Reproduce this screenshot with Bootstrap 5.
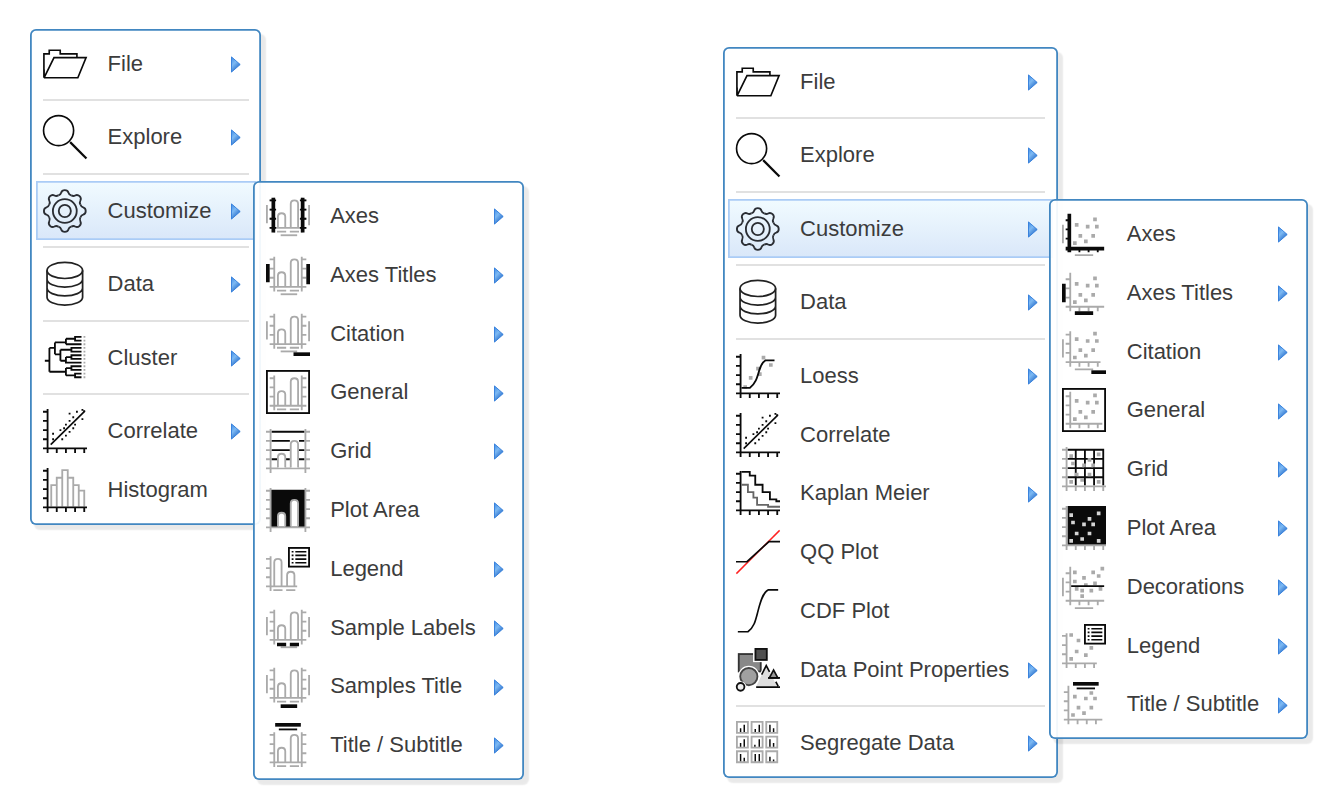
<!DOCTYPE html>
<html lang="en">
<head>
<meta charset="utf-8">
<meta name="viewport" content="width=device-width, initial-scale=1">
<title>Plot menus</title>
<link href="https://cdn.jsdelivr.net/npm/bootstrap@5.3.0/dist/css/bootstrap.min.css" rel="stylesheet">
<style>
  body { background: #fff; font-family: "Liberation Sans", Arial, sans-serif; height: 800px; overflow: hidden; }
  .stage { padding: 29px 0 0 30.3px; gap: 461.3px; }
  .plot-menu.dropdown-menu {
    --bs-dropdown-min-width: 0;
    padding: 5.5px;
    border: 0;
    border-radius: 6px;
    background: rgba(255,255,255,.93);
    box-shadow: inset 0 0 0 1.8px #4287c1, 4.5px 5px 1.5px rgba(0,0,0,.085);
    font-size: 22px;
    margin: 0;
  }
  .menu-a { width: 231.2px; }
  .menu-b { width: 335.3px; }
  .plot-menu.menu-b { margin-top: 18px; }
  .plot-menu.fly { position: absolute; top: -.3px; left: calc(100% - 3.1px); z-index: 5; }
  .fly-a { width: 271.2px; }
  .fly-b { width: 258.7px; }
  .plot-menu .dropdown-item {
    height: 58.8px; padding: 0 14.5px 0 7.4px; color: #3c3c3c; line-height: 1;
    border: 0 solid transparent;
  }
  .plot-menu .dropdown-item:hover { background: none; }
  .plot-menu .dropdown-item.picked {
    background: linear-gradient(#f1fbff, #d9e7f9);
    box-shadow: inset 0 0 0 1.8px #aaccf6;
  }
  .plot-menu .rule { height: 14.7px; padding: 6.2px 7.4px 0; }
  .plot-menu .rule hr { margin: 0; border: 0; height: 2px; background: #e1e1e1; opacity: 1; }
  .ico { width: 44px; height: 44px; flex: none; margin-right: 20.4px; overflow: visible; }
  .tip { width: 10px; height: 17px; flex: none; margin: 1.2px 0 0 auto; }
  symbol { overflow: visible; }
  .k, .g { fill: none; stroke: #0a0a0a; stroke-width: 1; }
  .g { stroke: #aaa; }
  .w2 { stroke-width: 2; }
</style>
</head>
<body>
<svg width="0" height="0" class="position-absolute" aria-hidden="true">
  <defs>
    <linearGradient id="blue" x1="0" y1="0" x2=".6" y2="1">
      <stop offset="0" stop-color="#3d8be6"/><stop offset=".45" stop-color="#7db9f3"/><stop offset="1" stop-color="#1c63c4"/>
    </linearGradient>
    <symbol id="tip" viewBox="0 0 10 17"><path d="M.5 .9L9.2 8.5L.5 16.1z" fill="url(#blue)" stroke="#2e7bda" stroke-width=".9"/></symbol>

    <symbol id="folder" viewBox="0 0 24 24"><path class="k" style="stroke-width:.9" d="M.5 19.5V6.5H3.4V4.5H9.4V6.5H18.5V8.5M.7 19.3L6 8.5H23.5L19 19.5H.5M.6 15V19.5"/></symbol>
    <symbol id="lens" viewBox="0 0 24 24"><circle class="k" cx="8.5" cy="8.5" r="8.2" style="stroke-width:.9"/><path class="k" style="stroke-width:1.2" d="M14.8 14.8L23.7 23.7"/></symbol>
    <symbol id="gear" viewBox="0 0 24 24">
      <g transform="translate(11.9 12)" fill="none" stroke="#2a2d33" stroke-width="1">
        <circle r="6.5"/><circle r="3.3"/>
        <path id="lobe" d="M-3.52-8.5C-2.6-8.8-2.2-9.2-2-10C-1.7-11-1-11.4 0-11.4S1.7-11 2-10C2.2-9.2 2.6-8.8 3.52-8.5"/>
        <use href="#lobe" transform="rotate(45)"/><use href="#lobe" transform="rotate(90)"/><use href="#lobe" transform="rotate(135)"/><use href="#lobe" transform="rotate(180)"/><use href="#lobe" transform="rotate(225)"/><use href="#lobe" transform="rotate(270)"/><use href="#lobe" transform="rotate(315)"/>
      </g>
    </symbol>
    <symbol id="db" viewBox="0 0 24 24"><g fill="none" stroke="#222" stroke-width=".95"><ellipse cx="11.9" cy="4.6" rx="9.7" ry="4.4"/><path d="M2.2 4.6V19.2C2.2 21.6 6.5 23.5 11.9 23.5S21.6 21.6 21.6 19.2V4.6M2.2 9.4C2.2 11.8 6.5 13.7 11.9 13.7S21.6 11.8 21.6 9.4M2.2 14.2C2.2 16.6 6.5 18.5 11.9 18.5S21.6 16.6 21.6 14.2"/></g></symbol>
    <symbol id="tree" viewBox="0 0 24 24"><path class="k" d="M1 13.5H3.5M3.5 6.5V19.5M3.5 6.5H6.5M6.5 3.5V10M6.5 3.5H12.5M12.5 1.5V4.5M12.5 1.5H17.5M21 .5H17.5V2.5H21M12.5 4.5H21M6.5 10H9.5M9.5 7.5V13.5M9.5 7.5H15.5M21 6.5H15.5V8.5H21M9.5 13.5H12.5M12.5 11.5V14.5H21M12.5 11.5H15.5M21 10.5H15.5V12.5H21M3.5 19.5H12.5M12.5 17.5V21.5M12.5 17.5H15.5M21 16.5H15.5V18.5H21M12.5 21.5H17.5M21 20.5H17.5V22.5H21"/><path class="g" d="M22.6 0V24" stroke-dasharray="1 1"/></symbol>
    <symbol id="axes-k" viewBox="0 0 24 24"><path class="k" d="M2.5 0V24M0 21.5H24M0 1.5H2.5M0 6.5H2.5M0 11.5H2.5M0 16.5H2.5M7.5 21V24M12.5 21V24M17.5 21V24M22.5 21V24"/></symbol>
    <symbol id="corr" viewBox="0 0 24 24"><use href="#axes-k"/><path class="k" style="stroke-width:.9" d="M4.2 19.4L22.8 1.2"/><path class="k" d="M14 2.5h1M18 1.5h1M21 .5h1M22 1.2h1M14 6.5h1M16 4.5h1M21 5.5h1M12 8.5h1M17 8.5h1M9 11.5h1M11 10.5h1M16 10.5h1M14 12.5h1M12 14.5h1M5 13.5h1M10 16.5h1M5 16.5h1"/></symbol>
    <symbol id="hist" viewBox="0 0 24 24"><path class="g" d="M4.5 21V9.3H7.5V21M7.5 9.3V5.3H10.5V21M10.5 5.3V1.2H13.5V21M13.5 5.3H16.5V21M16.5 9.3H19.5V21M19.5 12.3H22.5V21"/><use href="#axes-k"/></symbol>
    <symbol id="loess" viewBox="0 0 24 24"><path class="g w2" d="M14 2h2M18 6h2M7 13h2M11 8h2M12 11h2M4 18h2"/><use href="#axes-k"/><path class="k" d="M3 18.5H7.5C10.5 16.5 11.5 13 12.5 9.5S15.2 4 16 3.5H21"/></symbol>
    <symbol id="km" viewBox="0 0 24 24"><use href="#axes-k"/><path class="k" style="stroke:#666" d="M3 7.5H6.5V11.5H9.5V14.5H11.5V18.5H17.5V19.5H24"/><path class="k" d="M3 .5H7.5V2.5H10.5V7.5H14.5V11.5H18.5V15.5H22V16.5H24"/></symbol>
    <symbol id="qq" viewBox="0 0 24 24"><path d="M.2 23.8L23.8.2" stroke="#f22" stroke-width=".8"/><path class="k" style="stroke-width:.9" d="M0 17.3H6L18 6.3H24"/></symbol>
    <symbol id="cdf" viewBox="0 0 24 24"><path class="k" style="stroke-width:.9" d="M1 23.3H6.5C10 21 10.8 16.5 12 12S14.5 2 17.5.5H23"/></symbol>
    <symbol id="shapes" viewBox="0 0 24 24">
      <rect x="1.5" y="3.3" width="12" height="9.5" fill="#888" stroke="#333"/>
      <rect x="9.3" y="-.5" width="8.6" height="8.2" fill="#fff"/><rect x="10.6" y=".5" width="6.2" height="6" fill="#505050" stroke="#111"/>
      <path d="M11 21L16.5 9.5L22.5 21z" fill="#dedede" stroke="#fff" stroke-width="2"/><path d="M11 21L16.5 9.5L22.5 21z" fill="#dedede"/>
      <path d="M14 14.5L16.5 9.6L18.3 13M11 21.3H24M21.7 18.4L23 20.8" class="k" style="stroke-width:.9"/>
      <path d="M18.2 16.3L20.5 12L22.8 16.3z" fill="#999" stroke="#111" stroke-width=".9"/><path class="k" d="M17.5 16.3H24"/>
      <circle cx="7" cy="15.6" r="5.9" fill="#fff"/><circle cx="7" cy="15.6" r="4.7" fill="#a0a0a0" stroke="#444"/>
      <circle cx="2.5" cy="21.2" r="3.1" fill="#fff"/><circle cx="2.5" cy="21.2" r="2.1" fill="#eee" stroke="#111"/>
    </symbol>
    <symbol id="panels" viewBox="0 0 24 24">
      <path class="g" d="M.5.5h6v6h-6zM8.5.5h6v6h-6zM16.5.5h6v6h-6zM.5 8.5h6v6h-6zM8.5 8.5h6v6h-6zM16.5 8.5h6v6h-6zM.5 16.5h6v6h-6zM8.5 16.5h6v6h-6zM16.5 16.5h6v6h-6z"/>
      <path class="k" style="stroke-width:.8" d="M2.5 4v2M4.5 2v4M10.5 4.3v1.7M12.7 2v4M18.5 2v4M20.5 4v2M2.5 12v2M4.5 10v4M10.3 13v1M12.7 10v4M18.5 10v4M20.5 12v2M2.5 18v4M4.5 20v2M10.5 18v4M12.7 18v4M18.5 19.5v2.5M20.5 21v1"/>
    </symbol>

    <!-- bar chart parts -->
    <symbol id="bars" viewBox="0 0 24 24"><path class="g" d="M4.5 2V21M19.5 2V21M2 3.5H4.5M2 8.5H4.5M2 13.5H4.5M19.5 3.5H22M19.5 8.5H22M19.5 13.5H22M2 18.5H22M6.5 18V12.4Q6.5 10.5 8.5 10.5T10.5 12.4V18M13.5 18V5.4Q13.5 3.5 15.5 3.5T17.5 5.4V18"/></symbol>
    <symbol id="labels" viewBox="0 0 24 24"><path class="g" d="M6 20.5H11M13 20.5H18"/></symbol>
    <symbol id="sides" viewBox="0 0 24 24"><path class="g" d="M.5 6V16M23.5 6V17"/></symbol>
    <symbol id="foot" viewBox="0 0 24 24"><path class="g" d="M8 22.5H17"/></symbol>
    <symbol id="b-axes" viewBox="0 0 24 24"><use href="#bars"/><use href="#labels"/><use href="#sides"/><use href="#foot"/><path class="k w2" d="M4 2V21M20 2V21"/><path class="k" d="M2 3.5H5.5M2 8.5H5.5M2 13.5H5.5M2 18.5H5.5M18.5 3.5H22M18.5 8.5H22M18.5 13.5H22M18.5 18.5H22"/></symbol>
    <symbol id="b-titles" viewBox="0 0 24 24"><use href="#bars"/><use href="#labels"/><use href="#foot"/><path class="k w2" d="M1 6V16M23 6V17"/></symbol>
    <symbol id="b-cite" viewBox="0 0 24 24"><g transform="translate(0 -1)"><use href="#bars"/><use href="#labels"/><use href="#sides"/><use href="#foot"/></g><path class="k w2" d="M15 23H24"/></symbol>
    <symbol id="frame" viewBox="0 0 24 24"><rect class="k" x=".5" y=".5" width="23" height="23"/></symbol>
    <symbol id="b-gen" viewBox="0 0 24 24"><g transform="translate(0 1)"><use href="#bars"/><use href="#labels"/></g><use href="#frame"/></symbol>
    <symbol id="b-wide" viewBox="0 0 24 24"><path class="g" d="M2.5 0V24M21.5 0V24M0 1.5H3M0 6.5H3M0 11.5H3M0 16.5H3M21 1.5H24M21 6.5H24M21 11.5H24M21 16.5H24M0 21.5H24"/><path class="g" style="fill:#fff" d="M6.5 21V15.4Q6.5 13.5 8.5 13.5T10.5 15.4V21M13.5 21V8.4Q13.5 6.5 15.5 6.5T17.5 8.4V21"/></symbol>
    <symbol id="b-grid" viewBox="0 0 24 24"><path class="k" d="M3 1.5H21M3 6.5H21M3 11.5H21M3 16.5H21"/><path d="M13 5h5v16h-5z" fill="#fff"/><use href="#b-wide"/></symbol>
    <symbol id="b-area" viewBox="0 0 24 24"><path d="M2.5 1H21.5V21.5H2.5z" fill="#0a0a0a"/><use href="#b-wide"/></symbol>
    <symbol id="key" viewBox="0 0 24 24"><rect x="12.5" y=".5" width="11" height="10.2" fill="#fff" stroke="#0a0a0a"/><path class="k" style="stroke-width:.9" d="M14 2.6h1M16 2.6h6M14 4.6h1M16 4.6h6M14 6.6h1M16 6.6h6M14 8.6h1M16 8.6h6"/></symbol>
    <symbol id="b-key" viewBox="0 0 24 24"><path class="g" d="M2.5 5V24M0 6.5H2.5M0 11.5H2.5M0 16.5H2.5M0 21.5H17M4.5 21V8.4Q4.5 6.5 6.5 6.5T8.5 8.4V21M11.5 21V15.4Q11.5 13.5 13.5 13.5T15.5 15.4V21M4 23.5H9M11 23.5H16"/><use href="#key"/></symbol>
    <symbol id="b-labels" viewBox="0 0 24 24"><use href="#bars"/><use href="#sides"/><use href="#foot"/><path class="k w2" d="M6 21H11M13 21H18"/></symbol>
    <symbol id="b-foot" viewBox="0 0 24 24"><use href="#bars"/><use href="#labels"/><use href="#sides"/><path class="k w2" d="M8 23H17"/></symbol>
    <symbol id="b-head" viewBox="0 0 24 24"><g transform="translate(0 3)"><use href="#bars"/><use href="#labels"/></g><path class="k w2" d="M5 1H19"/><path class="k" d="M7 3.5H17"/></symbol>

    <!-- scatter plot parts -->
    <symbol id="pts" viewBox="0 0 24 24"><path class="g w2" d="M7 7h2M17 4h2M13 8h2M18 8h2M9 13h2M16 13h2M6 17h2M12 16h2"/></symbol>
    <symbol id="xy" viewBox="0 0 24 24"><path class="g" d="M4.5 1V22M2 19.5H23M2 4.5H4.5M2 9.5H4.5M2 14.5H4.5M9.5 19V22M14.5 19V22M19.5 19V22"/></symbol>
    <symbol id="xyt" viewBox="0 0 24 24"><path class="g" d="M.5 7V17M7 23.5H17"/></symbol>
    <symbol id="s-axes" viewBox="0 0 24 24"><use href="#pts"/><use href="#xyt"/><path class="k w2" d="M4 1V22M2 20H23"/><path class="k" d="M2 4.5H4M2 9.5H4M2 14.5H4M9.5 20V22M14.5 20V22M19.5 20V22"/></symbol>
    <symbol id="s-titles" viewBox="0 0 24 24"><use href="#pts"/><use href="#xy"/><path class="k w2" d="M1 7V17M7 23H17"/></symbol>
    <symbol id="s-cite" viewBox="0 0 24 24"><g transform="translate(0 -2)"><use href="#pts"/><path class="g" d="M4.5 2.7V22M2 19.5H21M2 4.5H4.5M2 9.5H4.5M2 14.5H4.5M9.5 19V22M14.5 19V22M19.5 19V22"/><use href="#xyt"/></g><path class="k w2" d="M16 23H24"/></symbol>
    <symbol id="s-gen" viewBox="0 0 24 24"><use href="#pts"/><path class="g" d="M4.5 2V22M2 19.5H22M2 4.5H4.5M2 9.5H4.5M2 14.5H4.5M9.5 19V22M14.5 19V22M19.5 19V22"/><use href="#frame"/></symbol>
    <symbol id="xyw" viewBox="0 0 24 24"><path class="g" d="M2.5 0V24M0 21.5H24M0 1.5H3M0 6.5H3M0 11.5H3M0 16.5H3M7.5 21V24M12.5 21V24M17.5 21V24M22.5 21V24"/></symbol>
    <path id="many" d="M4 5h2M19 4h2M14 7h2M5 9h2M11 10h2M16 10h2M7 15h2M14 15h2M4 19h2M10 18h2M19 19h2"/>
    <symbol id="s-grid" viewBox="0 0 24 24"><path class="k" d="M3 1.5H23M3 6.5H23M3 11.5H23M3 16.5H23M7.5 1V21M12.5 1V21M17.5 1V21M22.5 1V21"/><use href="#many" class="g w2"/><use href="#xyw"/></symbol>
    <symbol id="s-area" viewBox="0 0 24 24"><path d="M3 0H24V21.2H3z" fill="#0a0a0a"/><use href="#many" class="g w2" style="stroke:#d4d4d4"/><use href="#xyw"/></symbol>
    <symbol id="s-deco" viewBox="0 0 24 24"><path class="g w2" d="M6 4h2M21 2h2M16 4h2M11 7h2M19 6h2M6 9h2M17 10h2M12 11h2M7 13h2M20 13h2M10 14h2M15 14h2M10 17h2"/><use href="#xy"/><use href="#xyt"/><path class="k" d="M5 11.5H23"/></symbol>
    <symbol id="s-key" viewBox="0 0 24 24"><path class="g w2" d="M4 6h2M8 9h2M15 13h2M7 15h2M12 17h2M4 19h2"/><path class="g" d="M2.5 5V24M0 6.5H3M0 11.5H3M0 16.5H3M0 21.5H19M7.5 21V24M12.5 21V24M17.5 21V24"/><use href="#key"/></symbol>
    <symbol id="s-head" viewBox="0 0 24 24"><path class="g w2" d="M15 6h2M6 8h2M12 9h2M17 9h2M8 14h2M15 14h2M5 18h2M11 17h2"/><path class="g" d="M3.5 2V23M1 20.5H22M1 5.5H3.5M1 10.5H3.5M1 15.5H3.5M8.5 20V23M13.5 20V23M18.5 20V23"/><path class="k w2" d="M6 1H20"/><path class="k" d="M8 3.5H18"/></symbol>
  </defs>
</svg>

<main class="stage d-flex align-items-start">
  <ul class="plot-menu menu-a dropdown-menu show position-relative flex-shrink-0">
    <li><a class="dropdown-item d-flex align-items-center"><svg class="ico"><use href="#folder"/></svg>File<svg class="tip"><use href="#tip"/></svg></a></li>
    <li class="rule"><hr></li>
    <li><a class="dropdown-item d-flex align-items-center"><svg class="ico"><use href="#lens"/></svg>Explore<svg class="tip"><use href="#tip"/></svg></a></li>
    <li class="rule"><hr></li>
    <li class="position-relative">
      <a class="dropdown-item picked d-flex align-items-center"><svg class="ico"><use href="#gear"/></svg>Customize<svg class="tip"><use href="#tip"/></svg></a>
      <ul class="plot-menu fly fly-a dropdown-menu show">
        <li><a class="dropdown-item d-flex align-items-center"><svg class="ico"><use href="#b-axes"/></svg>Axes<svg class="tip"><use href="#tip"/></svg></a></li>
        <li><a class="dropdown-item d-flex align-items-center"><svg class="ico"><use href="#b-titles"/></svg>Axes Titles<svg class="tip"><use href="#tip"/></svg></a></li>
        <li><a class="dropdown-item d-flex align-items-center"><svg class="ico"><use href="#b-cite"/></svg>Citation<svg class="tip"><use href="#tip"/></svg></a></li>
        <li><a class="dropdown-item d-flex align-items-center"><svg class="ico"><use href="#b-gen"/></svg>General<svg class="tip"><use href="#tip"/></svg></a></li>
        <li><a class="dropdown-item d-flex align-items-center"><svg class="ico"><use href="#b-grid"/></svg>Grid<svg class="tip"><use href="#tip"/></svg></a></li>
        <li><a class="dropdown-item d-flex align-items-center"><svg class="ico"><use href="#b-area"/></svg>Plot Area<svg class="tip"><use href="#tip"/></svg></a></li>
        <li><a class="dropdown-item d-flex align-items-center"><svg class="ico"><use href="#b-key"/></svg>Legend<svg class="tip"><use href="#tip"/></svg></a></li>
        <li><a class="dropdown-item d-flex align-items-center"><svg class="ico"><use href="#b-labels"/></svg>Sample Labels<svg class="tip"><use href="#tip"/></svg></a></li>
        <li><a class="dropdown-item d-flex align-items-center"><svg class="ico"><use href="#b-foot"/></svg>Samples Title<svg class="tip"><use href="#tip"/></svg></a></li>
        <li><a class="dropdown-item d-flex align-items-center"><svg class="ico"><use href="#b-head"/></svg>Title / Subtitle<svg class="tip"><use href="#tip"/></svg></a></li>
      </ul>
    </li>
    <li class="rule"><hr></li>
    <li><a class="dropdown-item d-flex align-items-center"><svg class="ico"><use href="#db"/></svg>Data<svg class="tip"><use href="#tip"/></svg></a></li>
    <li class="rule"><hr></li>
    <li><a class="dropdown-item d-flex align-items-center"><svg class="ico"><use href="#tree"/></svg>Cluster<svg class="tip"><use href="#tip"/></svg></a></li>
    <li class="rule"><hr></li>
    <li><a class="dropdown-item d-flex align-items-center"><svg class="ico"><use href="#corr"/></svg>Correlate<svg class="tip"><use href="#tip"/></svg></a></li>
    <li><a class="dropdown-item d-flex align-items-center"><svg class="ico"><use href="#hist"/></svg>Histogram</a></li>
  </ul>

  <ul class="plot-menu menu-b dropdown-menu show position-relative flex-shrink-0">
    <li><a class="dropdown-item d-flex align-items-center"><svg class="ico"><use href="#folder"/></svg>File<svg class="tip"><use href="#tip"/></svg></a></li>
    <li class="rule"><hr></li>
    <li><a class="dropdown-item d-flex align-items-center"><svg class="ico"><use href="#lens"/></svg>Explore<svg class="tip"><use href="#tip"/></svg></a></li>
    <li class="rule"><hr></li>
    <li class="position-relative">
      <a class="dropdown-item picked d-flex align-items-center"><svg class="ico"><use href="#gear"/></svg>Customize<svg class="tip"><use href="#tip"/></svg></a>
      <ul class="plot-menu fly fly-b dropdown-menu show">
        <li><a class="dropdown-item d-flex align-items-center"><svg class="ico"><use href="#s-axes"/></svg>Axes<svg class="tip"><use href="#tip"/></svg></a></li>
        <li><a class="dropdown-item d-flex align-items-center"><svg class="ico"><use href="#s-titles"/></svg>Axes Titles<svg class="tip"><use href="#tip"/></svg></a></li>
        <li><a class="dropdown-item d-flex align-items-center"><svg class="ico"><use href="#s-cite"/></svg>Citation<svg class="tip"><use href="#tip"/></svg></a></li>
        <li><a class="dropdown-item d-flex align-items-center"><svg class="ico"><use href="#s-gen"/></svg>General<svg class="tip"><use href="#tip"/></svg></a></li>
        <li><a class="dropdown-item d-flex align-items-center"><svg class="ico"><use href="#s-grid"/></svg>Grid<svg class="tip"><use href="#tip"/></svg></a></li>
        <li><a class="dropdown-item d-flex align-items-center"><svg class="ico"><use href="#s-area"/></svg>Plot Area<svg class="tip"><use href="#tip"/></svg></a></li>
        <li><a class="dropdown-item d-flex align-items-center"><svg class="ico"><use href="#s-deco"/></svg>Decorations<svg class="tip"><use href="#tip"/></svg></a></li>
        <li><a class="dropdown-item d-flex align-items-center"><svg class="ico"><use href="#s-key"/></svg>Legend<svg class="tip"><use href="#tip"/></svg></a></li>
        <li><a class="dropdown-item d-flex align-items-center"><svg class="ico"><use href="#s-head"/></svg>Title / Subtitle<svg class="tip"><use href="#tip"/></svg></a></li>
      </ul>
    </li>
    <li class="rule"><hr></li>
    <li><a class="dropdown-item d-flex align-items-center"><svg class="ico"><use href="#db"/></svg>Data<svg class="tip"><use href="#tip"/></svg></a></li>
    <li class="rule"><hr></li>
    <li><a class="dropdown-item d-flex align-items-center"><svg class="ico"><use href="#loess"/></svg>Loess<svg class="tip"><use href="#tip"/></svg></a></li>
    <li><a class="dropdown-item d-flex align-items-center"><svg class="ico"><use href="#corr"/></svg>Correlate</a></li>
    <li><a class="dropdown-item d-flex align-items-center"><svg class="ico"><use href="#km"/></svg>Kaplan Meier<svg class="tip"><use href="#tip"/></svg></a></li>
    <li><a class="dropdown-item d-flex align-items-center"><svg class="ico"><use href="#qq"/></svg>QQ Plot</a></li>
    <li><a class="dropdown-item d-flex align-items-center"><svg class="ico"><use href="#cdf"/></svg>CDF Plot</a></li>
    <li><a class="dropdown-item d-flex align-items-center"><svg class="ico"><use href="#shapes"/></svg>Data Point Properties<svg class="tip"><use href="#tip"/></svg></a></li>
    <li class="rule"><hr></li>
    <li><a class="dropdown-item d-flex align-items-center"><svg class="ico"><use href="#panels"/></svg>Segregate Data<svg class="tip"><use href="#tip"/></svg></a></li>
  </ul>
</main>
<script src="https://cdn.jsdelivr.net/npm/bootstrap@5.3.0/dist/js/bootstrap.bundle.min.js"></script>
</body>
</html>
